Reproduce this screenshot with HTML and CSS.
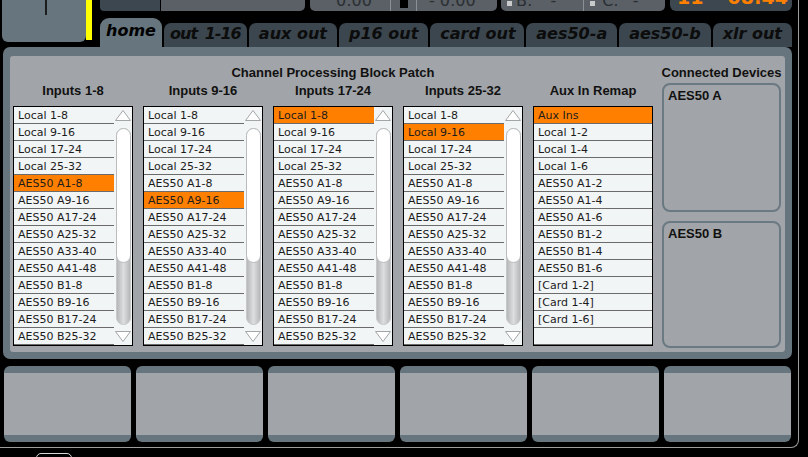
FILE: index.html
```html
<!DOCTYPE html>
<html lang="en">
<head>
    <meta charset="UTF-8">
    <meta name="viewport" content="width=device-width, initial-scale=1.0">
    <title>Routing - home</title>
    <link rel="stylesheet" href="styles.css">
</head>
<body>
    <svg class="defs" width="0" height="0">
        <defs>
            <linearGradient id="track" x1="0" x2="1" y1="0" y2="0">
                <stop offset="0" stop-color="#b2b4b6"/>
                <stop offset="0.5" stop-color="#dcdedf"/>
                <stop offset="1" stop-color="#b2b4b6"/>
            </linearGradient>
        </defs>
    </svg>

    <div class="frame">
        <div class="header">
            <div class="logo">
                <div class="corner"><span class="knob"></span></div>
                <div class="led"></div>
            </div>

            <div class="header-main">
                <div class="status">
                    <div class="seg seg-dark"></div>
                    <div class="seg seg-wide"></div>
                    <div class="seg seg-time">
                        <span class="readout">0:00</span>
                        <span class="divider gap-18"></span>
                        <span class="stop"></span>
                        <span class="divider gap-8"></span>
                        <span class="readout gap-12">- 0:00</span>
                    </div>
                    <div class="seg seg-scenes">
                        <span class="dot"></span>
                        <span class="readout gap-4">B:</span>
                        <span class="readout gap-18">-</span>
                        <span class="divider gap-27"></span>
                        <span class="dot gap-6"></span>
                        <span class="readout gap-7">C:</span>
                        <span class="readout gap-14">-</span>
                    </div>
                    <div class="seg seg-clock">
                        <span class="clock">11</span>
                        <span class="clock gap-24">08:44</span>
                    </div>
                </div>

                <div class="tabs">
                    <div class="tab tab-active">home</div>
                    <div class="tab tab-tight">out 1-16</div>
                    <div class="tab">aux out</div>
                    <div class="tab">p16 out</div>
                    <div class="tab tab-wide">card out</div>
                    <div class="tab">aes50-a</div>
                    <div class="tab">aes50-b</div>
                    <div class="tab">xlr out</div>
                </div>
            </div>
        </div>

        <div class="panel">
            <div class="inner">
                <div class="patch">
                    <h2 class="heading">Channel Processing Block Patch</h2>
                    <div class="columns">
                        <div class="column">
                            <h3 class="heading">Inputs 1-8</h3>
                            <div class="list">
                                <ul class="rows">
                                    <li>Local 1-8</li>
                                    <li>Local 9-16</li>
                                    <li>Local 17-24</li>
                                    <li>Local 25-32</li>
                                    <li class="selected">AES50 A1-8</li>
                                    <li>AES50 A9-16</li>
                                    <li>AES50 A17-24</li>
                                    <li>AES50 A25-32</li>
                                    <li>AES50 A33-40</li>
                                    <li>AES50 A41-48</li>
                                    <li>AES50 B1-8</li>
                                    <li>AES50 B9-16</li>
                                    <li>AES50 B17-24</li>
                                    <li>AES50 B25-32</li>
                                </ul>
                                <svg class="scroll" width="18" height="238" viewBox="0 0 18 238">
                                    <path d="M1.5 13.5 L9 3.5 L16.5 13.5 Z" fill="#fff" stroke="#a3a5a7"/>
                                    <rect x="2.5" y="21.5" width="14" height="196" rx="7" fill="url(#track)" stroke="#c6c8ca"/>
                                    <rect x="2.5" y="21.5" width="14" height="134" rx="7" fill="#fff" stroke="#b9bbbd"/>
                                    <path d="M1.5 224.5 L9 234.5 L16.5 224.5 Z" fill="#fff" stroke="#a3a5a7"/>
                                </svg>
                            </div>
                        </div>

                        <div class="column">
                            <h3 class="heading">Inputs 9-16</h3>
                            <div class="list">
                                <ul class="rows">
                                    <li>Local 1-8</li>
                                    <li>Local 9-16</li>
                                    <li>Local 17-24</li>
                                    <li>Local 25-32</li>
                                    <li>AES50 A1-8</li>
                                    <li class="selected">AES50 A9-16</li>
                                    <li>AES50 A17-24</li>
                                    <li>AES50 A25-32</li>
                                    <li>AES50 A33-40</li>
                                    <li>AES50 A41-48</li>
                                    <li>AES50 B1-8</li>
                                    <li>AES50 B9-16</li>
                                    <li>AES50 B17-24</li>
                                    <li>AES50 B25-32</li>
                                </ul>
                                <svg class="scroll" width="18" height="238" viewBox="0 0 18 238">
                                    <path d="M1.5 13.5 L9 3.5 L16.5 13.5 Z" fill="#fff" stroke="#a3a5a7"/>
                                    <rect x="2.5" y="21.5" width="14" height="196" rx="7" fill="url(#track)" stroke="#c6c8ca"/>
                                    <rect x="2.5" y="21.5" width="14" height="134" rx="7" fill="#fff" stroke="#b9bbbd"/>
                                    <path d="M1.5 224.5 L9 234.5 L16.5 224.5 Z" fill="#fff" stroke="#a3a5a7"/>
                                </svg>
                            </div>
                        </div>

                        <div class="column">
                            <h3 class="heading">Inputs 17-24</h3>
                            <div class="list">
                                <ul class="rows">
                                    <li class="selected">Local 1-8</li>
                                    <li>Local 9-16</li>
                                    <li>Local 17-24</li>
                                    <li>Local 25-32</li>
                                    <li>AES50 A1-8</li>
                                    <li>AES50 A9-16</li>
                                    <li>AES50 A17-24</li>
                                    <li>AES50 A25-32</li>
                                    <li>AES50 A33-40</li>
                                    <li>AES50 A41-48</li>
                                    <li>AES50 B1-8</li>
                                    <li>AES50 B9-16</li>
                                    <li>AES50 B17-24</li>
                                    <li>AES50 B25-32</li>
                                </ul>
                                <svg class="scroll" width="18" height="238" viewBox="0 0 18 238">
                                    <path d="M1.5 13.5 L9 3.5 L16.5 13.5 Z" fill="#fff" stroke="#a3a5a7"/>
                                    <rect x="2.5" y="21.5" width="14" height="196" rx="7" fill="url(#track)" stroke="#c6c8ca"/>
                                    <rect x="2.5" y="21.5" width="14" height="134" rx="7" fill="#fff" stroke="#b9bbbd"/>
                                    <path d="M1.5 224.5 L9 234.5 L16.5 224.5 Z" fill="#fff" stroke="#a3a5a7"/>
                                </svg>
                            </div>
                        </div>

                        <div class="column">
                            <h3 class="heading">Inputs 25-32</h3>
                            <div class="list">
                                <ul class="rows">
                                    <li>Local 1-8</li>
                                    <li class="selected">Local 9-16</li>
                                    <li>Local 17-24</li>
                                    <li>Local 25-32</li>
                                    <li>AES50 A1-8</li>
                                    <li>AES50 A9-16</li>
                                    <li>AES50 A17-24</li>
                                    <li>AES50 A25-32</li>
                                    <li>AES50 A33-40</li>
                                    <li>AES50 A41-48</li>
                                    <li>AES50 B1-8</li>
                                    <li>AES50 B9-16</li>
                                    <li>AES50 B17-24</li>
                                    <li>AES50 B25-32</li>
                                </ul>
                                <svg class="scroll" width="18" height="238" viewBox="0 0 18 238">
                                    <path d="M1.5 13.5 L9 3.5 L16.5 13.5 Z" fill="#fff" stroke="#a3a5a7"/>
                                    <rect x="2.5" y="21.5" width="14" height="196" rx="7" fill="url(#track)" stroke="#c6c8ca"/>
                                    <rect x="2.5" y="21.5" width="14" height="134" rx="7" fill="#fff" stroke="#b9bbbd"/>
                                    <path d="M1.5 224.5 L9 234.5 L16.5 224.5 Z" fill="#fff" stroke="#a3a5a7"/>
                                </svg>
                            </div>
                        </div>

                        <div class="column">
                            <h3 class="heading">Aux In Remap</h3>
                            <div class="list">
                                <ul class="rows">
                                    <li class="selected">Aux Ins</li>
                                    <li>Local 1-2</li>
                                    <li>Local 1-4</li>
                                    <li>Local 1-6</li>
                                    <li>AES50 A1-2</li>
                                    <li>AES50 A1-4</li>
                                    <li>AES50 A1-6</li>
                                    <li>AES50 B1-2</li>
                                    <li>AES50 B1-4</li>
                                    <li>AES50 B1-6</li>
                                    <li>[Card 1-2]</li>
                                    <li>[Card 1-4]</li>
                                    <li>[Card 1-6]</li>
                                    <li></li>
                                </ul>
                            </div>
                        </div>
                    </div>
                </div>

                <div class="devices">
                    <h2 class="heading">Connected Devices</h2>
                    <div class="device device-a"><h4 class="heading">AES50 A</h4></div>
                    <div class="device device-b"><h4 class="heading">AES50 B</h4></div>
                </div>
            </div>
        </div>

        <div class="softkeys">
            <div class="softkey"></div>
            <div class="softkey"></div>
            <div class="softkey"></div>
            <div class="softkey"></div>
            <div class="softkey"></div>
            <div class="softkey"></div>
        </div>
    </div>

    <div class="footer">
        <div class="footer-tab"></div>
    </div>
</body>
</html>
```

FILE: styles.css
```css
* {
    box-sizing: border-box;
    margin: 0;
    padding: 0;
}

body {
    background-color: #000;
    width: 808px;
    height: 457px;
    overflow: hidden;
    font-family: 'DejaVu Sans', Verdana, sans-serif;
}

.defs {
    position: absolute;
}

.frame {
    width: 799px;
    height: 448px;
    border-right: 1px solid #9d9d9d;
    border-bottom: 1px solid #9d9d9d;
    border-bottom-right-radius: 8px;
}

/* header: logo corner, status strip, tabs */

.header {
    display: flex;
    height: 47px;
}

.logo {
    display: flex;
    align-items: flex-start;
    width: 100px;
    padding-left: 2px;
}

.corner {
    width: 84px;
    height: 42px;
    padding-left: 43px;
    background-color: #67757e;
    border-radius: 0 0 6px 6px;
}

.knob {
    display: block;
    width: 2px;
    height: 15px;
    background-color: #1b1d1f;
}

.led {
    width: 6px;
    height: 40px;
    background-color: #ffff00;
}

.header-main {
    width: 692px;
}

.status {
    display: flex;
    height: 11px;
    overflow: hidden;
}

.seg {
    display: flex;
    align-items: flex-start;
    height: 11px;
    background-color: #5a6065;
    overflow: hidden;
    white-space: nowrap;
}

.seg-dark {
    width: 60px;
    margin-right: 1px;
    background-color: #3c474f;
    border-radius: 0 0 0 4px;
}

.seg-wide {
    width: 144px;
    margin-right: 5px;
    border-radius: 0 0 5px 0;
}

.seg-time {
    width: 187px;
    margin-right: 4px;
    padding-left: 26px;
    border-radius: 0 0 5px 5px;
}

.seg-scenes {
    width: 164px;
    margin-right: 5px;
    padding-left: 6px;
    border-radius: 0 0 5px 5px;
}

.seg-clock {
    width: 122px;
    padding-left: 7px;
    background-color: #3c474f;
    border-radius: 0 0 6px 6px;
}

.readout {
    margin-top: -7px;
    font-size: 16px;
    line-height: 16px;
    color: #2a2f33;
}

.clock {
    margin-top: -12px;
    font-size: 19px;
    font-weight: bold;
    line-height: 19px;
    color: #ff8000;
}

.divider {
    width: 1px;
    height: 11px;
    background-color: #8b9094;
}

.stop {
    width: 8px;
    height: 8px;
    margin-left: 9px;
    background-color: #000;
}

.dot {
    width: 5px;
    height: 5px;
    margin-top: 1px;
    background-color: #c8cacb;
}

.gap-4 { margin-left: 4px; }
.gap-6 { margin-left: 6px; }
.gap-7 { margin-left: 7px; }
.gap-8 { margin-left: 8px; }
.gap-12 { margin-left: 12px; }
.gap-14 { margin-left: 14px; }
.gap-18 { margin-left: 18px; }
.gap-24 { margin-left: 24px; }
.gap-27 { margin-left: 27px; }

.tabs {
    display: flex;
    align-items: flex-end;
    gap: 2px;
    height: 29px;
    margin-top: 7px;
}

.tab {
    height: 24px;
    padding: 2px 10px 0;
    background-color: #3b464e;
    border-radius: 7px 7px 0 0;
    font-size: 16px;
    font-style: italic;
    font-weight: bold;
    line-height: 18px;
    color: #0c0c0c;
    text-align: center;
    white-space: nowrap;
}

.tab-active {
    height: 29px;
    padding: 4px 6px 0;
    background-color: #67757e;
    border-radius: 9px 9px 0 0;
    color: #000;
}

.tab-tight {
    width: 91px;
    padding: 2px 0 0;
    letter-spacing: -1px;
    word-spacing: 3px;
}

.tab-wide {
    width: 94px;
}

/* main panel */

.panel {
    width: 789px;
    height: 312px;
    margin-left: 3px;
    padding: 9px 7px 7px;
    background-color: #67757e;
    border-radius: 7px;
}

.inner {
    display: flex;
    gap: 9px;
    height: 296px;
    padding: 9px 4px 0 3px;
    background-color: #a1a4a8;
    border-radius: 3px;
}

.heading {
    font-family: 'Liberation Sans', Arial, sans-serif;
    font-size: 13px;
    font-weight: bold;
    line-height: 15px;
    color: #111;
    white-space: nowrap;
}

.patch {
    width: 640px;
}

.patch > .heading,
.column .heading,
.devices > .heading {
    text-align: center;
}

.columns {
    display: flex;
    gap: 10px;
    margin-top: 3px;
}

.column {
    width: 120px;
}

.column .heading {
    margin-bottom: 8px;
}

.list {
    display: flex;
    height: 240px;
    background-color: #f2f5f6;
    border: 1px solid #000;
}

.rows {
    flex: 1;
    list-style: none;
}

.rows li {
    height: 17px;
    padding: 1px 0 0 4px;
    border-bottom: 1px solid #6b6b6b;
    font-size: 11px;
    line-height: 15px;
    color: #1c1c1c;
    white-space: nowrap;
    overflow: hidden;
}

.rows li.selected {
    background-color: #ff8000;
}

.scroll {
    flex: none;
}

.devices {
    width: 119px;
}

.devices > .heading {
    margin: 0 -3px 3px;
}

.device {
    padding: 3px 4px;
    border: 2px solid #6b7982;
    border-radius: 8px;
}

.device-a {
    height: 129px;
}

.device-b {
    height: 127px;
    margin-top: 9px;
}

/* bottom soft keys */

.softkeys {
    display: flex;
    gap: 5px;
    margin: 7px 0 0 4px;
}

.softkey {
    width: 127px;
    height: 76px;
    background-color: #a1a4a8;
    border-top: 7px solid #67757e;
    border-bottom: 7px solid #67757e;
    border-radius: 6px;
}

.footer {
    padding: 5px 0 0 36px;
}

.footer-tab {
    width: 36px;
    height: 10px;
    border: 1px solid #d6d6d6;
    border-radius: 5px 5px 0 0;
}
```
